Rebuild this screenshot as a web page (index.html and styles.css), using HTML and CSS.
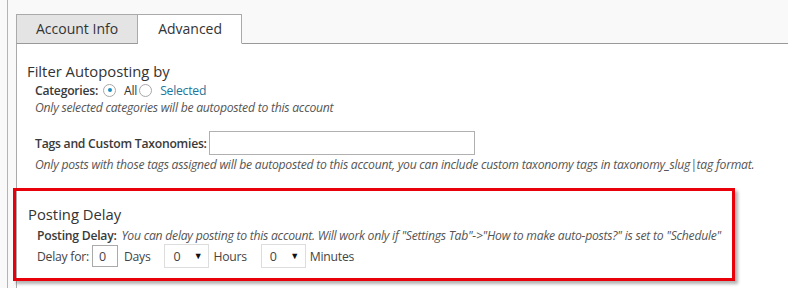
FILE: index.html
```html
<!DOCTYPE html>
<html>
  <head>
    <meta http-equiv="Content-Type" content="text/html;charset=utf-8" />
    <title>Account settings</title>
    <link rel="stylesheet" href="styles.css">
  </head>

  <body>
    <div class="page">
      <!-- Tabs -->
      <div class="tabs">
        <div class="tab">Account Info</div>
        <div class="tab active">Advanced</div>
      </div>

      <div class="panel">
        <h3 class="section-title">Filter Autoposting by</h3>
        <div class="field-row">
          <span class="field-label">Categories:</span>
          <span class="radio checked"></span>
          <span class="radio-text">All</span>
          <span class="radio"></span>
          <span class="radio-text link">Selected</span>
        </div>
        <div class="hint">Only selected categories will be autoposted to this account</div>

        <div class="field-row tags-row">
          <span class="field-label">Tags and Custom Taxonomies:</span>
          <input type="text" class="text-input" />
        </div>
        <div class="hint">Only posts with those tags assigned will be autoposted to this account, you can include custom taxonomy tags in taxonomy_slug|tag format.</div>

        <!-- Highlighted section -->
        <div class="delay-box">
          <h3 class="section-title">Posting Delay</h3>
          <div class="delay-desc">
            <span class="field-label">Posting Delay:</span>
            <i>You can delay posting to this account. Will work only if "Settings Tab"-&gt;"How to make auto-posts?" is set to "Schedule"</i>
          </div>
          <div class="delay-row">
            <span>Delay for:</span>
            <input type="text" class="small-input" value="0" />
            <span>Days</span>
            <span class="select-wrap">
              <select class="small-select">
                <option>0</option>
              </select>
            </span>
            <span>Hours</span>
            <span class="select-wrap">
              <select class="small-select">
                <option>0</option>
              </select>
            </span>
            <span>Minutes</span>
          </div>
        </div>
      </div>
    </div>
  </body>
</html>
```

FILE: styles.css
```css
body {
  margin: 0;
  background-color: #f9f9f9;
  color: #333;
  font-family: "Open Sans", Arial, sans-serif;
  font-size: 12.2px;
  letter-spacing: -0.25px;
}

.page {
  margin-left: 7px;
  height: 288px;
  overflow: hidden;
  border-left: 1px solid #b4b4b4;
  padding: 14px 0 0 8px;
  box-sizing: border-box;
}

.tabs {
  display: flex;
  border-bottom: 1px solid #999;
}

.tab {
  height: 28px;
  line-height: 28px;
  padding: 0 19px;
  margin-bottom: -1px;
  font-size: 14px;
  letter-spacing: 0;
  color: #333;
  background-color: #e4e4e4;
  border: 1px solid #aaa;
  border-bottom-color: #999;
}

.tab.active {
  padding: 0 19px 0 20px;
  background-color: #fff;
  border-left: none;
  border-bottom-color: #fff;
}

.panel {
  background-color: #fff;
  border-left: 1px solid #aaa;
  padding: 17px 0 20px 10px;
}

.section-title {
  margin: 0;
  font-size: 14.8px;
  font-weight: 400;
  line-height: 20px;
  letter-spacing: 0;
  color: #333;
}

.field-row {
  display: flex;
  align-items: center;
  height: 18px;
  padding-left: 8px;
}

.field-label {
  font-weight: 600;
  color: #3a3a3a;
  margin-right: 5px;
}

.radio {
  width: 13px;
  height: 13px;
  border: 1px solid #a8a8a8;
  border-radius: 50%;
  box-sizing: border-box;
  position: relative;
  margin-right: 8px;
}

.radio.checked::after {
  content: "";
  position: absolute;
  left: 3.5px;
  top: 3.5px;
  width: 4px;
  height: 4px;
  border-radius: 50%;
  background-color: #1e8cbe;
}

.radio-text {
  margin-right: 2px;
}

.link {
  color: #21759b;
}

.hint {
  font-style: italic;
  line-height: 17px;
  color: #555;
  padding-left: 8px;
}

.tags-row {
  height: 24px;
  margin-top: 15px;
}

.tags-row .field-label {
  margin-right: 2px;
}

.text-input {
  width: 266px;
  height: 24px;
  box-sizing: border-box;
  border: 1px solid #b0b0b0;
  margin: 0;
}

.tags-row + .hint {
  margin-top: 1px;
}

.delay-box {
  width: 722px;
  box-sizing: border-box;
  margin: 15px 0 0 -14px;
  padding: 13px 0 10px 12px;
  border: 3px solid #e8000b;
  box-shadow: 3px 3px 3px rgba(0, 0, 0, 0.3);
}

.delay-desc {
  line-height: 16px;
  margin-top: 4px;
  padding-left: 9px;
}

.delay-desc .field-label {
  margin-right: 2px;
}

.delay-desc i {
  color: #555;
}

.delay-row {
  display: flex;
  align-items: center;
  height: 24px;
  padding-left: 9px;
  color: #444;
}

.small-input {
  width: 26px;
  height: 22px;
  box-sizing: border-box;
  border: 1px solid #aaa;
  margin: 0 6px 0 3px;
  padding: 0 6px;
  font-family: inherit;
  font-size: 12.5px;
  color: #444;
}

.select-wrap {
  position: relative;
  margin: 0 4px 0 14px;
}

.select-wrap::after {
  content: "\25BC";
  position: absolute;
  right: 7px;
  top: 7px;
  font-size: 9px;
  line-height: 9px;
  color: #111;
  pointer-events: none;
}

.small-select {
  display: block;
  width: 45px;
  height: 24px;
  appearance: none;
  -webkit-appearance: none;
  border: 1px solid #ddd;
  border-radius: 0;
  background-color: #fff;
  padding: 0 0 0 8px;
  font-family: inherit;
  font-size: 12.5px;
  color: #444;
}
```
